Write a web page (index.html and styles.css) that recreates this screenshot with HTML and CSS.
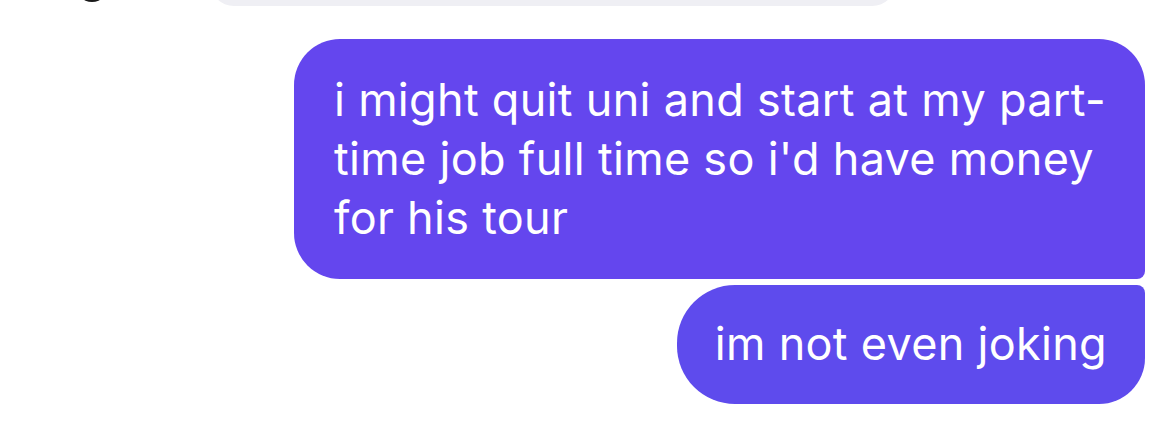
FILE: index.html
```html
<!DOCTYPE html>
<html>
<head>
<meta charset="utf-8">
<link rel="stylesheet" href="styles.css">
</head>
<body>
<div class="thread">
  <div class="prev-row">
    <div class="avatar"></div>
    <div class="prev-bubble"></div>
  </div>
  <div class="outgoing">
    <div class="bubble first">i might quit uni and start at my part-time job full time so i'd have money for his tour</div>
    <div class="bubble last">im not even joking</div>
  </div>
</div>
</body>
</html>
```

FILE: styles.css
```css
html, body {
  margin: 0;
  padding: 0;
  background: #ffffff;
}
.thread {
  width: 1170px;
  height: 435px;
  overflow: hidden;
  font-family: Inter, "Liberation Sans", sans-serif;
}
.prev-row {
  height: 6px;
  overflow: hidden;
  display: flex;
  align-items: flex-end;
}
.avatar {
  width: 34px;
  height: 34px;
  border-radius: 50%;
  background: #1a1a1a;
  margin-left: 75px;
  margin-bottom: 4px;
  flex-shrink: 0;
}
.prev-bubble {
  width: 686px;
  height: 60px;
  margin-left: 101px;
  background: #efeff4;
  border-radius: 0 0 24px 24px;
}
.outgoing {
  display: flex;
  flex-direction: column;
  align-items: flex-end;
  gap: 6px;
  padding-top: 33px;
  padding-right: 25px;
}
.bubble {
  color: #ffffff;
  font-size: 45px;
  line-height: 59px;
  letter-spacing: 0.3px;
  box-sizing: border-box;
}
.bubble.first {
  width: 851px;
  background: #6446ee;
  padding: 31px 18px 32px 40px;
  border-radius: 46px 46px 8px 46px;
}
.bubble.last {
  background: #5e4bed;
  padding: 29px 38px 31px 38px;
  border-radius: 58px 8px 46px 58px;
}
```
